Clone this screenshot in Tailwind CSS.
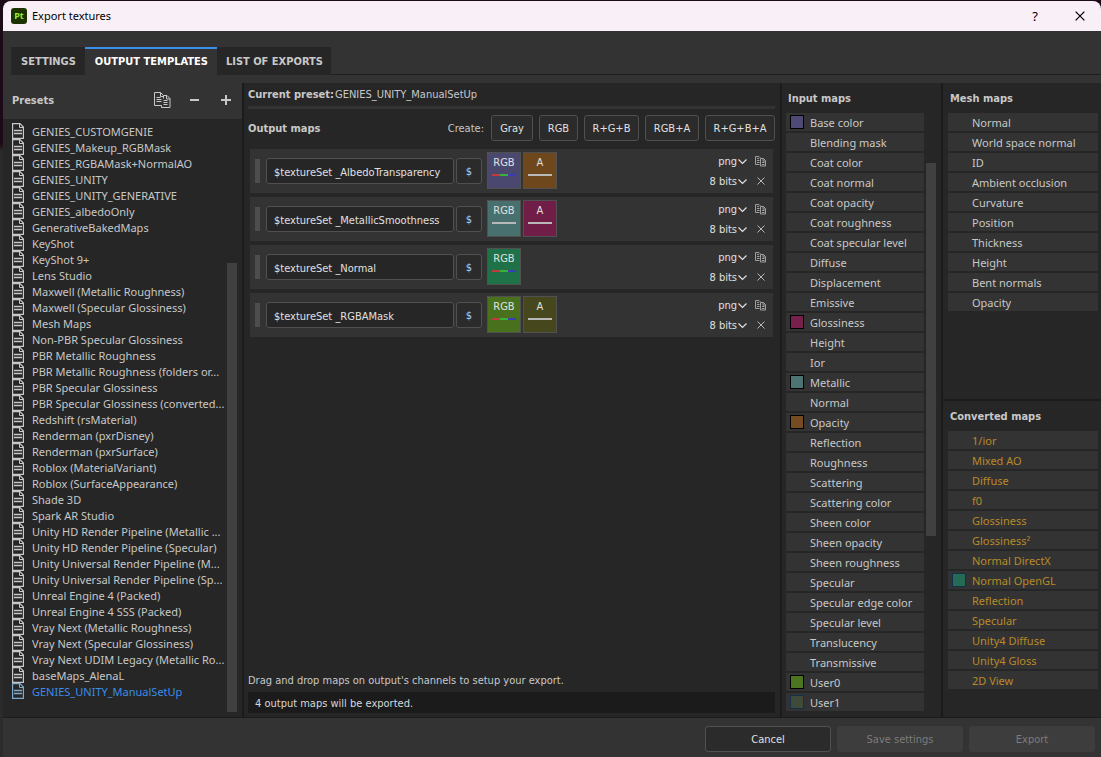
<!DOCTYPE html>
<html lang="en">
<head>
<meta charset="utf-8">
<title>Export textures</title>
<script src="https://cdn.jsdelivr.net/npm/@tailwindcss/browser@4"></script>
</head>
<body class="h-screen overflow-hidden bg-linear-to-b from-[#1d0a18] from-19% to-[#2b2b2b] to-20% pl-[3px] pt-px font-['Noto_Sans','Open_Sans',sans-serif] text-[11px] leading-4 text-[#c8c8c8]">
<svg class="hidden" aria-hidden="true">
  <symbol id="doc" viewBox="0 0 12 16"><path d="M.6.6h7.400l3.400 3.400v11.400H.6z" fill="none" stroke="currentColor" stroke-width="1.200"/><path d="M7.500 1v3.500H11" fill="none" stroke="currentColor"/><path d="M2 7.500h8M2 10.500h8" stroke="currentColor" stroke-width="1.400"/></symbol>
  <symbol id="copy" viewBox="0 0 17 16"><path d="M7.500 13.500h-7V.5h6l3 3M6.500.5v4H9M2.500 5.500h4M2.500 7.500h5M2.500 9.500h5" fill="none" stroke="currentColor"/><path d="M7.500 13.500v2h8.500v-9l-3-3H9.500v3M12.500 3.500v3.500H16M9.500 8.500h4M9.500 10.500h4M9.500 12.500h4" fill="none" stroke="currentColor"/></symbol>
  <symbol id="copysmall" viewBox="0 0 11 11"><path d="M4.500 8.500h-4v-8H4L5.500 2M2 2.500h2M2 4.500h2.500M2 6.500h2.500" fill="none" stroke="currentColor"/><path d="M5.500 2.500H8.500l2 2v5.500h-5zM8 2.500v2.500h2.500M7 6.500h2.500M7 8.500h2.500" fill="none" stroke="currentColor"/></symbol>
  <symbol id="chev" viewBox="0 0 9 6"><path d="M.5.5l4 4 4-4" fill="none" stroke="currentColor" stroke-width="1.200"/></symbol>
  <symbol id="cross" viewBox="0 0 8 8"><path d="M.5.5l7 7M7.500.5l-7 7" fill="none" stroke="currentColor"/></symbol>
</svg>
<div class="flex h-full flex-col overflow-hidden rounded-t-lg bg-[#333333]">
  <header class="flex h-[30px] shrink-0 items-center bg-[#f9eff6] pr-4 pl-2 text-black">
    <span class="flex size-4 items-center justify-center rounded-[3px] bg-[#1c3300] text-[9px] leading-4 font-bold text-[#9be83a]">Pt</span>
    <h1 class="ml-[5px] grow">Export textures</h1>
    <button class="mr-[37px] text-[13px]" aria-label="Help">?</button>
    <button aria-label="Close"><svg class="size-[10px]" viewBox="0 0 8 8"><use href="#cross"/></svg></button>
  </header>

  <nav class="mt-4 flex h-7 shrink-0 font-['DejaVu_Sans_Condensed','Noto_Sans',sans-serif] font-bold" role="tablist">
    <div class="w-2"></div>
    <button role="tab" class="bg-[#262626] pt-[6px] pr-[9px] pb-1 pl-[10px]">SETTINGS</button>
    <button role="tab" aria-selected="true" class="border-t-2 border-[#3a8de8] pt-1 pr-[9px] pb-1 pl-[10px] text-white">OUTPUT TEMPLATES</button>
    <button role="tab" class="bg-[#262626] pt-[6px] pr-[8px] pb-1 pl-[9px]">LIST OF EXPORTS</button>
    <div class="grow border-b border-[#1e1e1e]"></div>
  </nav>

  <main class="mt-2 flex min-h-0 grow border-b border-[#1b1b1b] bg-[#262626]">
    <section class="flex w-[239px] shrink-0 flex-col">
      <div class="flex h-9 shrink-0 items-center bg-[#333333] pr-[11px] pb-[3px] pl-[9px]">
        <h2 class="grow pt-[2px] font-['DejaVu_Sans_Condensed','Noto_Sans',sans-serif] font-bold">Presets</h2>
        <button aria-label="Duplicate preset"><svg class="h-4 w-[17px]"><use href="#copy"/></svg></button>
        <button aria-label="Remove preset" class="ml-[19px] flex size-[9px] items-center"><span class="h-[2px] w-full bg-[#c8c8c8]"></span></button>
        <button aria-label="Add preset" class="ml-[22px]"><svg class="size-[10px]" viewBox="0 0 10 10"><path d="M5 0v10M0 5h10" stroke="currentColor" stroke-width="2"/></svg></button>
      </div>
      <div class="flex min-h-0 grow pt-1 pr-[5px] pb-[5px] pl-[9px]">
        <ul id="presets" class="min-w-0 grow"></ul>
        <div class="mt-[140px] w-[10px] shrink-0 bg-[#404040]"></div>
      </div>
    </section>

    <section class="flex min-w-0 grow flex-col border-x-2 border-[#1b1b1b] pr-[5px] pl-1 font-['DejaVu_Sans_Condensed','Noto_Sans',sans-serif]">
      <p class="flex gap-px border-b-[3px] border-[#333333] pt-1 pb-[3px]"><b>Current preset:</b><span>GENIES_UNITY_ManualSetUp</span></p>
      <div class="mt-[6px] flex items-center gap-[6px]">
        <h2 class="grow pt-[2px] font-bold">Output maps</h2>
        <span class="mr-px pt-[2px]">Create:</span>
        <button class="h-[26px] w-[42px] rounded-[3px] border border-[#505050] bg-[#2b2b2b] pt-[2px] text-[#e0e0e0]">Gray</button>
        <button class="h-[26px] w-[39px] rounded-[3px] border border-[#505050] bg-[#2b2b2b] pt-[2px] text-[#e0e0e0]">RGB</button>
        <button class="h-[26px] w-[55px] rounded-[3px] border border-[#505050] bg-[#2b2b2b] pt-[2px] text-[#e0e0e0]">R+G+B</button>
        <button class="h-[26px] w-[54px] rounded-[3px] border border-[#505050] bg-[#2b2b2b] pt-[2px] text-[#e0e0e0]">RGB+A</button>
        <button class="h-[26px] w-[70px] rounded-[3px] border border-[#505050] bg-[#2b2b2b] pt-[2px] text-[#e0e0e0]">R+G+B+A</button>
      </div>
      <div id="outputs" class="mt-2 flex grow flex-col gap-1 px-[2px]"></div>
      <p>Drag and drop maps on output's channels to setup your export.</p>
      <p class="mt-[3px] mb-1 bg-[#1b1b1b] px-[7px] pt-[3px] pb-px leading-[17px] text-[#d8d8d8]">4 output maps will be exported.</p>
    </section>

    <section class="flex w-[159px] shrink-0 flex-col pl-1">
      <h2 class="pt-2 pb-[6px] pl-[2px] font-['DejaVu_Sans_Condensed','Noto_Sans',sans-serif] font-bold">Input maps</h2>
      <div class="flex min-h-0 grow gap-[2px] pb-1">
        <ul id="inputs" class="w-[138px] space-y-[2px]"></ul>
        <div class="mt-[50px] h-[373px] w-[10px] bg-[#404040]"></div>
      </div>
    </section>

    <section class="flex w-[160px] shrink-0 flex-col border-l-2 border-[#1b1b1b]">
      <div class="h-[318px] border-b-2 border-[#1b1b1b] pr-[3px] pl-[5px]">
        <h2 class="pt-2 pb-[6px] pl-[2px] font-['DejaVu_Sans_Condensed','Noto_Sans',sans-serif] font-bold">Mesh maps</h2>
        <ul id="mesh" class="space-y-[2px]"></ul>
      </div>
      <div class="pr-[3px] pl-[5px]">
        <h2 class="pt-2 pb-[6px] pl-[2px] font-['DejaVu_Sans_Condensed','Noto_Sans',sans-serif] font-bold">Converted maps</h2>
        <ul id="converted" class="space-y-[2px] text-[#b88a28]"></ul>
      </div>
    </section>
  </main>

  <footer class="flex h-[39px] shrink-0 items-start justify-end gap-[6px] pt-2 pr-[6px] font-['DejaVu_Sans_Condensed','Noto_Sans',sans-serif]">
    <button class="h-[26px] w-[126px] rounded-[3px] border border-[#505050] bg-[#2b2b2b] pt-[2px] text-[#e0e0e0]">Cancel</button>
    <button disabled class="h-[26px] w-[126px] rounded-[3px] bg-[#3d3d3d] pt-[2px] text-[#7c7c7c]">Save settings</button>
    <button disabled class="h-[26px] w-[126px] rounded-[3px] bg-[#3d3d3d] pt-[2px] text-[#7c7c7c]">Export</button>
  </footer>
</div>
<script>
const presets = ["GENIES_CUSTOMGENIE","GENIES_Makeup_RGBMask","GENIES_RGBAMask+NormalAO","GENIES_UNITY","GENIES_UNITY_GENERATIVE","GENIES_albedoOnly","GenerativeBakedMaps","KeyShot","KeyShot 9+","Lens Studio","Maxwell (Metallic Roughness)","Maxwell (Specular Glossiness)","Mesh Maps","Non-PBR Specular Glossiness","PBR Metallic Roughness","PBR Metallic Roughness (folders or...","PBR Specular Glossiness","PBR Specular Glossiness (converted...","Redshift (rsMaterial)","Renderman (pxrDisney)","Renderman (pxrSurface)","Roblox (MaterialVariant)","Roblox (SurfaceAppearance)","Shade 3D","Spark AR Studio","Unity HD Render Pipeline (Metallic ...","Unity HD Render Pipeline (Specular)","Unity Universal Render Pipeline (M...","Unity Universal Render Pipeline (Sp...","Unreal Engine 4 (Packed)","Unreal Engine 4 SSS (Packed)","Vray Next (Metallic Roughness)","Vray Next (Specular Glossiness)","Vray Next UDIM Legacy (Metallic Ro...","baseMaps_AlenaL","GENIES_UNITY_ManualSetUp"];
document.getElementById("presets").innerHTML = presets.map((p, i) => `<li><button class="flex h-4 items-center gap-2 whitespace-nowrap ${i === presets.length - 1 ? "text-[#3a8de8]" : ""}"><svg class="h-4 w-3 shrink-0 ${i === presets.length - 1 ? "text-[#7fa9c9]" : ""}"><use href="#doc"/></svg><span class="pt-[2px]">${p}</span></button></li>`).join("");

const rgb = '<span class="flex h-[2px] w-6"><i class="grow bg-[#c03c3c]"></i><i class="grow bg-[#3cb03c]"></i><i class="grow bg-[#3c3cb8]"></i></span>';
const flat = '<span class="h-[2px] w-6 bg-[#b8b8b8]"></span>';
const outputs = [
  ["AlbedoTransparency", [["RGB", "bg-[#4b4870]", rgb], ["A", "bg-[#6f471d]", flat]]],
  ["MetallicSmoothness", [["RGB", "bg-[#48706f]", flat], ["A", "bg-[#701d48]", flat]]],
  ["Normal", [["RGB", "bg-[#1f7148]", rgb]]],
  ["RGBAMask", [["RGB", "bg-[#48701d]", rgb], ["A", "bg-[#47471d]", flat]]]
];
const pick = (label, a, b) => `<span class="relative flex items-center"><select aria-label="${label}" class="field-sizing-content appearance-none bg-transparent pr-[10px] outline-none"><option>${a}</option><option>${b}</option></select><svg class="pointer-events-none absolute right-0 h-[6px] w-[9px]"><use href="#chev"/></svg></span>`;
document.getElementById("outputs").innerHTML = outputs.map(([name, chans]) => `<div class="flex h-11 shrink-0 items-center bg-[#333333] pr-[7px] pl-[5px] text-[#e0e0e0]">
  <span class="h-6 w-[5px] bg-[#4d4d4d]"></span>
  <input aria-label="Output name" value="$textureSet _${name}" class="ml-[6px] h-[26px] w-[188px] rounded-[3px] border border-[#505050] bg-[#262626] px-[7px] pt-[2px]">
  <button aria-label="Insert variable" class="ml-[2px] h-[26px] w-[26px] rounded-[3px] border border-[#505050] bg-[#2b2b2b] pt-[2px] text-[#b4d0e6]">$</button>
  <div class="mt-[3px] ml-[5px] flex grow gap-[2px] self-start">${chans.map(([c, bg, bar]) => `<button class="flex h-[37px] w-[34px] flex-col items-center gap-[3px] border border-[#505050] pt-[2px] ${bg}"><span>${c}</span>${bar}</button>`).join("")}</div>
  <div class="flex flex-col items-end gap-1 pt-[2px]">${pick("File format", "png", "tga")}${pick("Bit depth", "8 bits", "16 bits")}</div>
  <div class="ml-2 flex flex-col items-center gap-[10px] pb-[2px] text-[#b8b8b8]"><button aria-label="Duplicate output"><svg class="size-[11px] text-[#a0a0a0]"><use href="#copysmall"/></svg></button><button aria-label="Delete output"><svg class="size-2"><use href="#cross"/></svg></button></div>
</div>`).join("");

const swatches = {"Base color": "bg-[#4d4b75] border-black", "Glossiness": "bg-[#75214c] border-black", "Metallic": "bg-[#4c7473] border-black", "Opacity": "bg-[#754c21] border-black", "User0": "bg-[#4c7521] border-black", "User1": "bg-[#3f4a38] border-[#12304a]", "Normal OpenGL": "bg-[#246a55] border-[#12304a]"};
const fill = (id, names, marked) => {
  document.getElementById(id).innerHTML = names.map(n => `<li class="flex h-[18px] items-center bg-[#333333] pl-1"><span class="size-[14px] shrink-0 ${marked.includes(n) ? "border " + swatches[n] : ""}"></span><span class="ml-[6px] whitespace-nowrap pt-[2px]">${n}</span></li>`).join("");
};
fill("inputs", ["Base color","Blending mask","Coat color","Coat normal","Coat opacity","Coat roughness","Coat specular level","Diffuse","Displacement","Emissive","Glossiness","Height","Ior","Metallic","Normal","Opacity","Reflection","Roughness","Scattering","Scattering color","Sheen color","Sheen opacity","Sheen roughness","Specular","Specular edge color","Specular level","Translucency","Transmissive","User0","User1"], ["Base color","Glossiness","Metallic","Opacity","User0","User1"]);
fill("mesh", ["Normal","World space normal","ID","Ambient occlusion","Curvature","Position","Thickness","Height","Bent normals","Opacity"], []);
fill("converted", ["1/ior","Mixed AO","Diffuse","f0","Glossiness","Glossiness²","Normal DirectX","Normal OpenGL","Reflection","Specular","Unity4 Diffuse","Unity4 Gloss","2D View"], ["Normal OpenGL"]);
</script>
</body>
</html>
